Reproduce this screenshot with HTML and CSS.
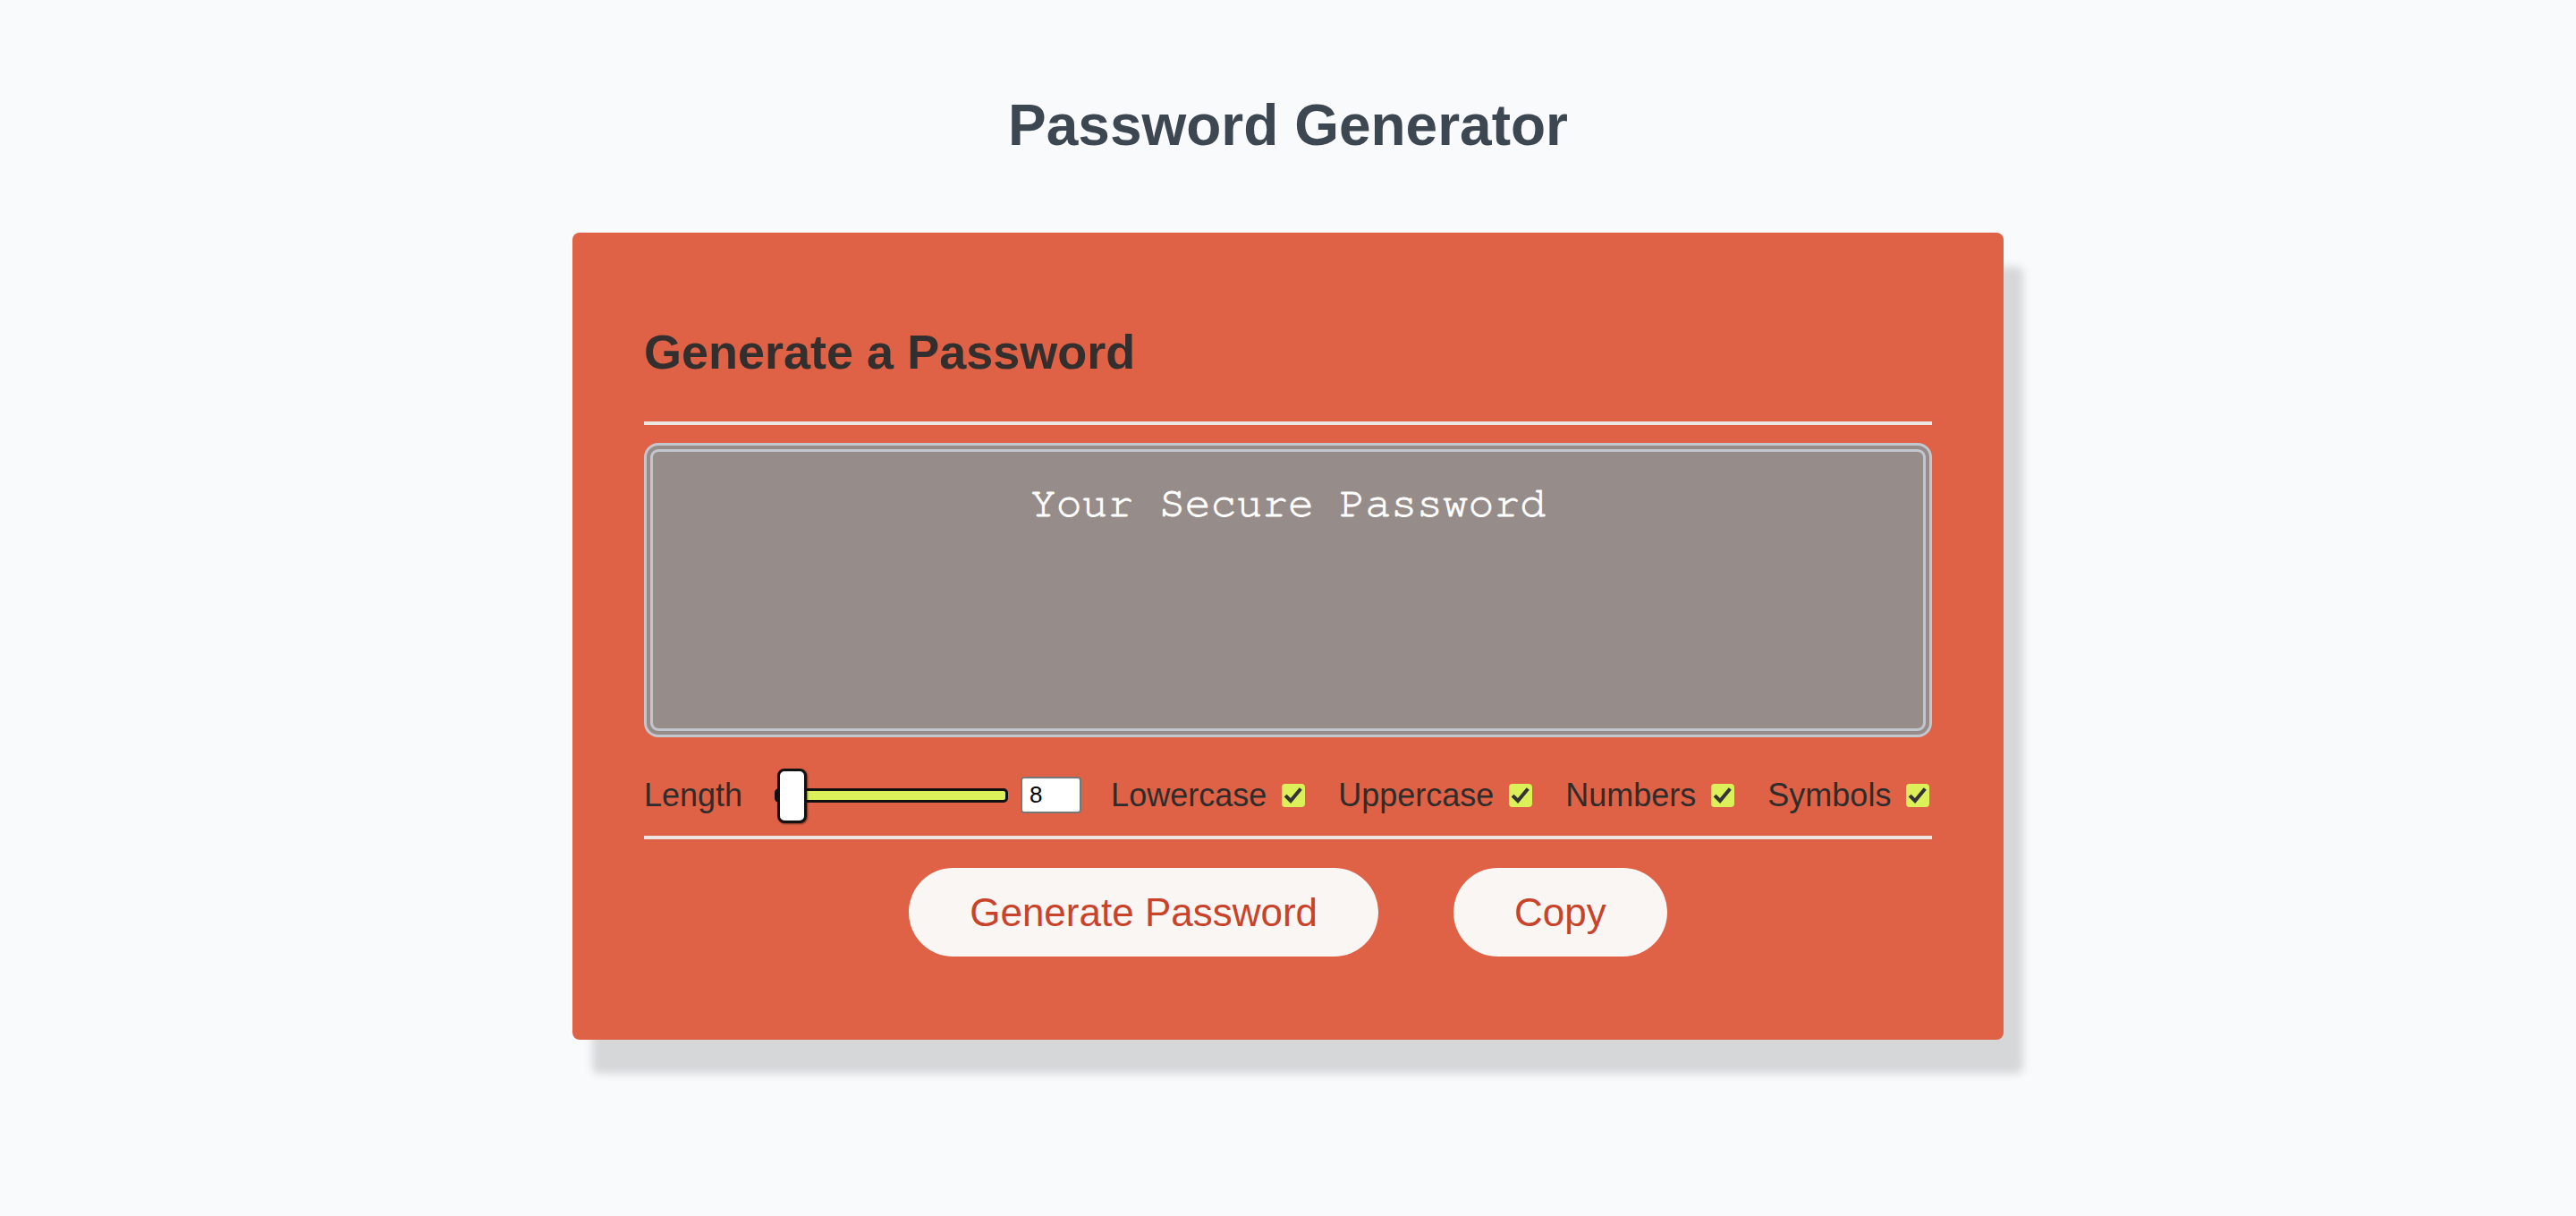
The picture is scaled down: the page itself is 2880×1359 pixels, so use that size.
FILE: index.html
```html
<!DOCTYPE html>
<html lang="en">
<head>
<meta charset="utf-8">
<title>Password Generator</title>
<link rel="stylesheet" href="styles.css">
</head>
<body>
<h1 class="page-title">Password Generator</h1>
<main class="card">
  <h2 class="card-title">Generate a Password</h2>
  <hr class="divider divider-top">
  <div class="password-box">
    <span class="password-text">Your Secure Password</span>
  </div>
  <div class="options">
    <span class="opt-label length-label">Length</span>
    <input class="slider" type="range" min="8" max="128" value="8">
    <input class="length-num" type="text" value="8">
    <label class="opt opt-first"><span class="opt-label">Lowercase</span><span class="check"><svg viewBox="0 0 26 26" width="26" height="26"><path d="M5.5 14.5 L10 19 L20 7" fill="none" stroke="#333" stroke-width="4" stroke-linecap="square"/></svg></span></label>
    <label class="opt"><span class="opt-label">Uppercase</span><span class="check"><svg viewBox="0 0 26 26" width="26" height="26"><path d="M5.5 14.5 L10 19 L20 7" fill="none" stroke="#333" stroke-width="4" stroke-linecap="square"/></svg></span></label>
    <label class="opt"><span class="opt-label">Numbers</span><span class="check"><svg viewBox="0 0 26 26" width="26" height="26"><path d="M5.5 14.5 L10 19 L20 7" fill="none" stroke="#333" stroke-width="4" stroke-linecap="square"/></svg></span></label>
    <label class="opt"><span class="opt-label">Symbols</span><span class="check"><svg viewBox="0 0 26 26" width="26" height="26"><path d="M5.5 14.5 L10 19 L20 7" fill="none" stroke="#333" stroke-width="4" stroke-linecap="square"/></svg></span></label>
  </div>
  <hr class="divider divider-bottom">
  <div class="actions">
    <button class="btn" type="button">Generate Password</button>
    <button class="btn" type="button">Copy</button>
  </div>
</main>
</body>
</html>
```

FILE: styles.css
```css
* {
  box-sizing: border-box;
}

html {
  background: #f9fafb;
}

body {
  margin: 0;
  min-height: 1359px;
  padding-bottom: 120px;
  background: #f9fafb;
  font-family: "Liberation Sans", Arial, Helvetica, sans-serif;
}

.page-title {
  margin: 103px 0 0;
  font-size: 64px;
  line-height: 74px;
  font-weight: 700;
  color: #3d4752;
  text-align: center;
}

.card {
  display: block;
  width: 1600px;
  margin: 83px auto 0;
  padding: 103px 80px 93px;
  background: #df6246;
  border-radius: 8px;
  box-shadow: 22px 38px 10px #d6d7d9;
}

.card-title {
  margin: 0;
  font-size: 54px;
  line-height: 61px;
  font-weight: 700;
  color: #332f2e;
}

.divider {
  display: block;
  height: 4px;
  margin: 0;
  border: none;
  background: #ece6e3;
}

.divider-top {
  margin-top: 47px;
}

.divider-bottom {
  margin-top: 16px;
}

.password-box {
  margin-top: 20px;
  height: 329px;
  padding-top: 31px;
  border: 10px double #c2c7ce;
  border-radius: 16px;
  background: #968d8a;
  text-align: center;
}

.password-text {
  font-family: "Nimbus Mono PS", "Nimbus Mono L", "FreeMono", "Liberation Mono", monospace;
  font-size: 48px;
  line-height: 54px;
  color: #ffffff;
  -webkit-text-stroke: 0.9px #ffffff;
}

.options {
  display: flex;
  align-items: center;
  height: 59px;
  margin-top: 35px;
}

.opt-label {
  font-size: 36px;
  line-height: 41px;
  color: #2f2d2c;
}

.length-label {
  margin-right: 36px;
}

.slider {
  -webkit-appearance: none;
  appearance: none;
  width: 261px;
  height: 61px;
  margin: 0;
  background: transparent;
}

.slider::-webkit-slider-runnable-track {
  height: 16px;
  background: #dcf05a;
  border: 3px solid #111;
  border-radius: 5px;
}

.slider::-webkit-slider-thumb {
  -webkit-appearance: none;
  appearance: none;
  width: 33px;
  height: 61px;
  margin-top: -25px;
  background: #ffffff;
  border: 3px solid #111;
  border-radius: 8px;
  box-shadow: 1px 1px 2px rgba(0, 0, 0, 0.5);
}

.length-num {
  width: 68px;
  height: 41px;
  margin: 0 0 0 14px;
  padding: 0 0 0 8px;
  border: 2px solid #777;
  border-radius: 4px;
  background: #fff;
  font-family: "Liberation Sans", Arial, sans-serif;
  font-size: 26px;
  color: #000;
}

.opt {
  display: flex;
  align-items: center;
  gap: 17px;
  margin-left: 37px;
}

.opt-first {
  margin-left: 33px;
}

.check {
  display: block;
  width: 26px;
  height: 26px;
  background: #dcf05a;
  border-radius: 4px;
}

.check svg {
  display: block;
}

.actions {
  display: flex;
  justify-content: center;
  gap: 84px;
  margin-top: 32px;
}

.btn {
  height: 99px;
  padding: 0 68px;
  border: none;
  border-radius: 50px;
  background: #faf6f4;
  color: #c9432b;
  font-family: "Liberation Sans", Arial, sans-serif;
  font-size: 44px;
  line-height: 99px;
}
```
